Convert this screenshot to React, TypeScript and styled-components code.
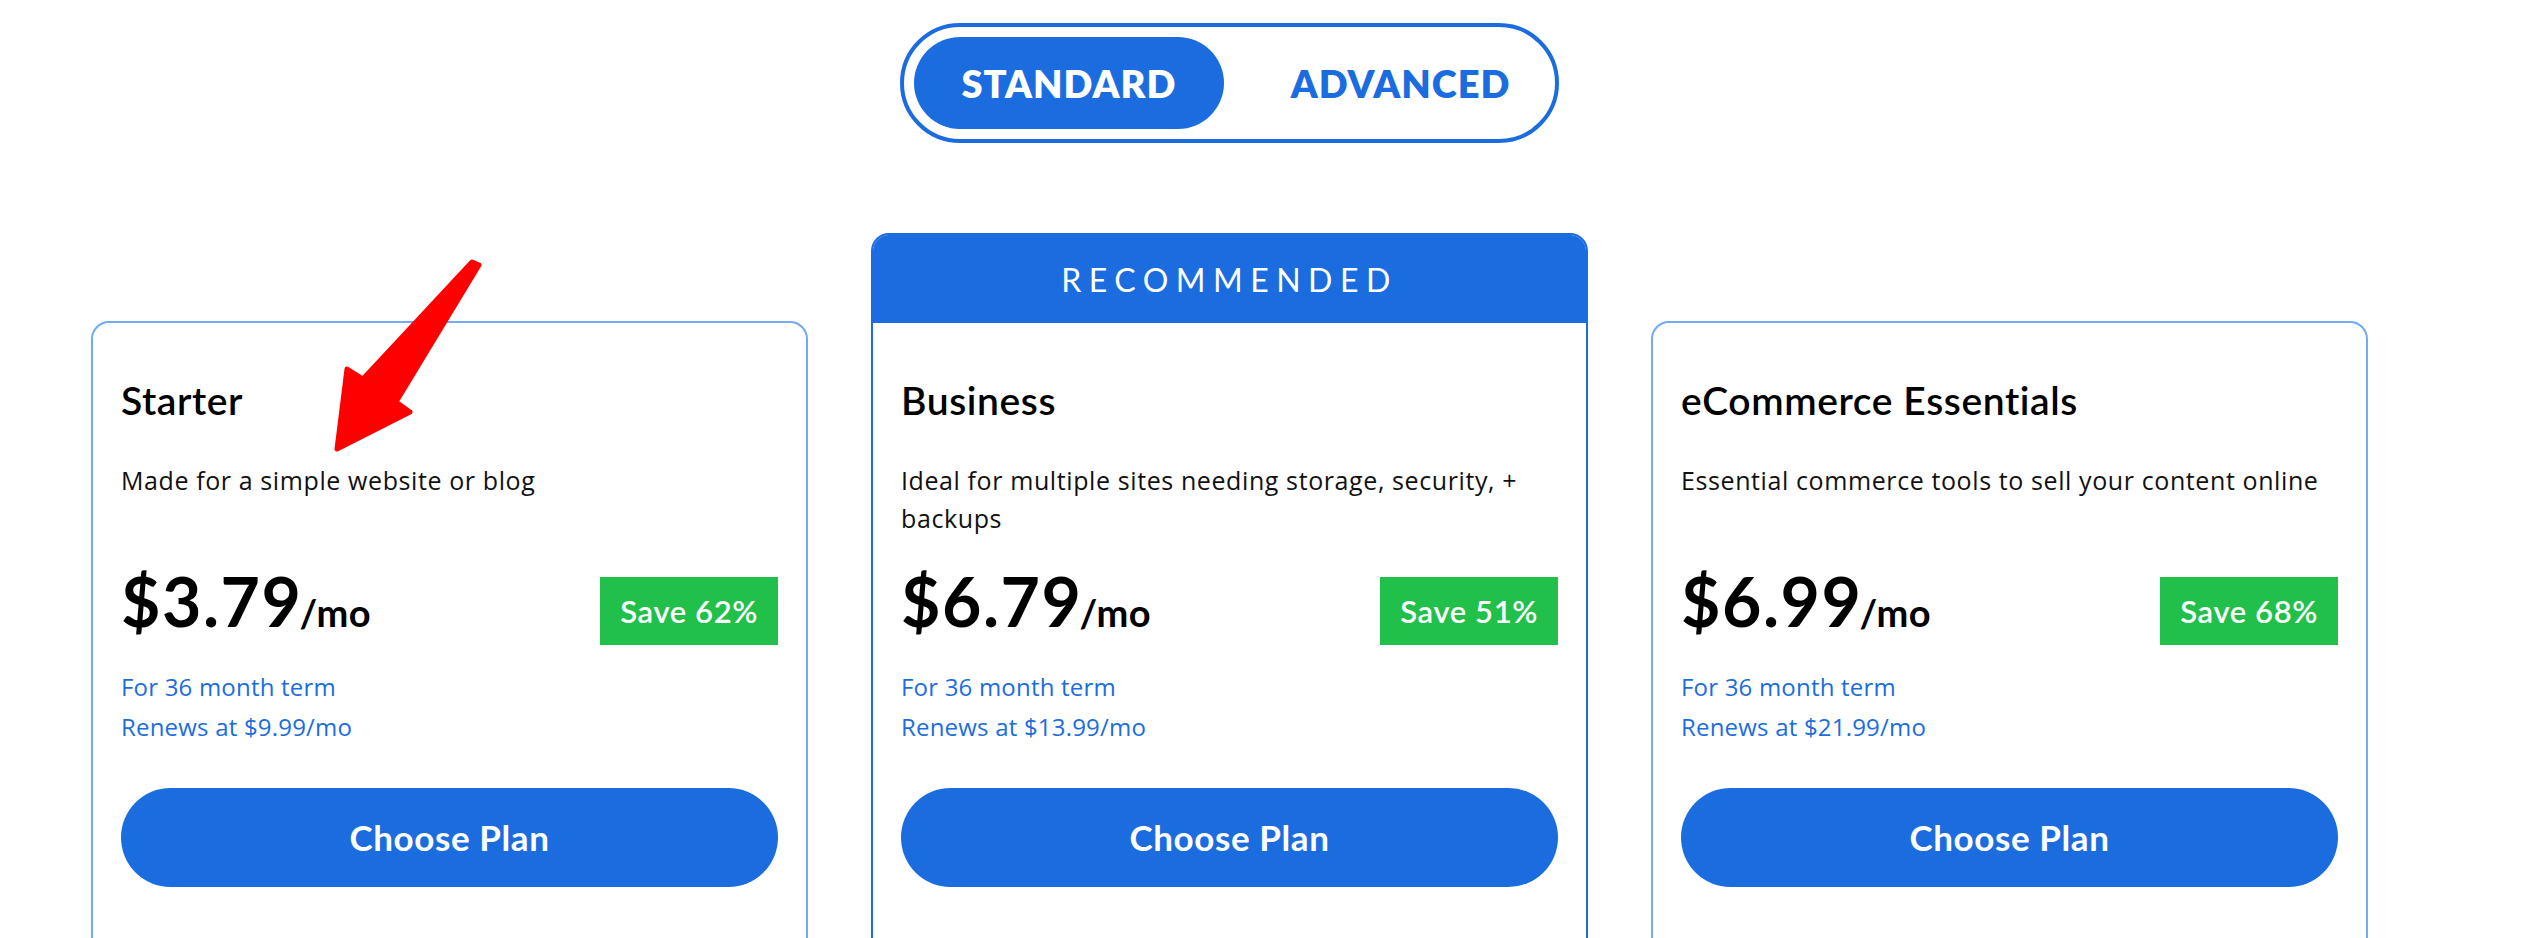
import styled, { createGlobalStyle } from "styled-components";

const blue = "#1b6ddf";
const lightBlue = "#72abf3";
const green = "#21c04a";
const bodyFont = `"Open Sans", Lato, "Liberation Sans", sans-serif`;

const GlobalStyle = createGlobalStyle`
  *, *::before, *::after {
    box-sizing: border-box;
  }
  html,
  body {
    margin: 0;
    padding: 0;
    background: #ffffff;
    overflow: hidden;
  }
  body {
    font-family: Lato, "Liberation Sans", sans-serif;
    color: #000000;
  }
`;

const Page = styled.main`
  position: relative;
  width: 2368px;
  padding: 23px 0 0 91px;
  display: flex;
  flex-direction: column;
  align-items: center;
`;

const Toggle = styled.div`
  display: flex;
  width: 659px;
  height: 120px;
  padding: 10px;
  border: 4px solid ${blue};
  border-radius: 999px;
`;

const ToggleButton = styled.button<{ $active?: boolean }>`
  display: flex;
  align-items: center;
  justify-content: center;
  border: none;
  border-radius: 999px;
  font-family: Lato, "Liberation Sans", sans-serif;
  font-size: 38px;
  font-weight: 800;
  letter-spacing: 1px;
  cursor: pointer;
  background: ${(p) => (p.$active ? blue : "transparent")};
  color: ${(p) => (p.$active ? "#ffffff" : blue)};
  width: ${(p) => (p.$active ? "310px" : "auto")};
  flex: ${(p) => (p.$active ? "0 0 auto" : "1")};
  padding: ${(p) => (p.$active ? "0" : "0 0 0 32px")};
`;

const Plans = styled.section`
  display: flex;
  align-items: flex-end;
  gap: 63px;
  width: 100%;
  margin-top: 90px;
`;

const Card = styled.article<{ $featured?: boolean }>`
  flex: 0 0 717px;
  display: flex;
  flex-direction: column;
  border: 2px solid ${(p) => (p.$featured ? blue : lightBlue)};
  border-radius: 18px;
  overflow: hidden;
  background: #ffffff;
`;

const Ribbon = styled.div`
  height: 88px;
  display: flex;
  align-items: center;
  justify-content: center;
  background: ${blue};
  color: #ffffff;
  font-size: 32px;
  font-weight: 400;
  letter-spacing: 7.5px;
`;

const CardBody = styled.div`
  padding: 55px 28px 160px;
`;

const Title = styled.h2`
  margin: 0;
  font-size: 39px;
  font-weight: 600;
  line-height: 1.17;
  letter-spacing: 0.6px;
`;

const Description = styled.p`
  margin: 37px 0 0;
  min-height: 76px;
  font-family: ${bodyFont};
  font-size: 25px;
  line-height: 38px;
  letter-spacing: 0.6px;
  color: #111111;
`;

const PriceRow = styled.div`
  display: flex;
  justify-content: space-between;
  align-items: flex-start;
  margin-top: 30px;
`;

const Price = styled.div`
  font-size: 68px;
  font-weight: 700;
  line-height: 1;
  letter-spacing: 1.5px;
`;

const PerMonth = styled.span`
  margin-left: -3px;
  font-size: 38px;
  letter-spacing: 0.5px;
`;

const SaveBadge = styled.div`
  display: flex;
  align-items: center;
  height: 68px;
  margin-top: 10px;
  padding: 0 20px;
  background: ${green};
  color: #ffffff;
  font-size: 31px;
  font-weight: 600;
  letter-spacing: 0.6px;
`;

const Terms = styled.div`
  margin-top: 22px;
  font-family: ${bodyFont};
  font-size: 24px;
  line-height: 40px;
  letter-spacing: 0.2px;
  color: ${blue};
`;

const ChooseButton = styled.button`
  display: block;
  width: 100%;
  height: 99px;
  margin-top: 41px;
  border: none;
  border-radius: 999px;
  background: ${blue};
  color: #ffffff;
  font-family: Lato, "Liberation Sans", sans-serif;
  font-size: 35px;
  font-weight: 700;
  letter-spacing: 0.6px;
  cursor: pointer;
`;

const Annotation = styled.svg`
  position: absolute;
  left: 320px;
  top: 250px;
  width: 175px;
  height: 215px;
  pointer-events: none;
`;

type Plan = {
  name: string;
  description: string;
  price: string;
  save: string;
  renews: string;
  featured?: boolean;
};

const plans: Plan[] = [
  {
    name: "Starter",
    description: "Made for a simple website or blog",
    price: "$3.79",
    save: "Save 62%",
    renews: "Renews at $9.99/mo",
  },
  {
    name: "Business",
    description: "Ideal for multiple sites needing storage, security, + backups",
    price: "$6.79",
    save: "Save 51%",
    renews: "Renews at $13.99/mo",
    featured: true,
  },
  {
    name: "eCommerce Essentials",
    description: "Essential commerce tools to sell your content online",
    price: "$6.99",
    save: "Save 68%",
    renews: "Renews at $21.99/mo",
  },
];

const PlanCard = ({ plan }: { plan: Plan }) => (
  <Card $featured={plan.featured}>
    {plan.featured && <Ribbon>RECOMMENDED</Ribbon>}
    <CardBody>
      <Title>{plan.name}</Title>
      <Description>{plan.description}</Description>
      <PriceRow>
        <Price>
          {plan.price}
          <PerMonth>/mo</PerMonth>
        </Price>
        <SaveBadge>{plan.save}</SaveBadge>
      </PriceRow>
      <Terms>
        <div>For 36 month term</div>
        <div>{plan.renews}</div>
      </Terms>
      <ChooseButton>Choose Plan</ChooseButton>
    </CardBody>
  </Card>
);

export default function App() {
  return (
    <>
      <GlobalStyle />
      <Page>
        <Toggle>
          <ToggleButton $active>STANDARD</ToggleButton>
          <ToggleButton>ADVANCED</ToggleButton>
        </Toggle>
        <Plans>
          {plans.map((plan) => (
            <PlanCard key={plan.name} plan={plan} />
          ))}
        </Plans>
        <Annotation viewBox="320 250 175 215">
          <path
            d="M472 262 L479 265 L396 402 L410 412 L337 449 L347 369 L363 379 Z"
            fill="#ff0000"
            stroke="#ff0000"
            strokeWidth={5}
            strokeLinejoin="round"
          />
        </Annotation>
      </Page>
    </>
  );
}
